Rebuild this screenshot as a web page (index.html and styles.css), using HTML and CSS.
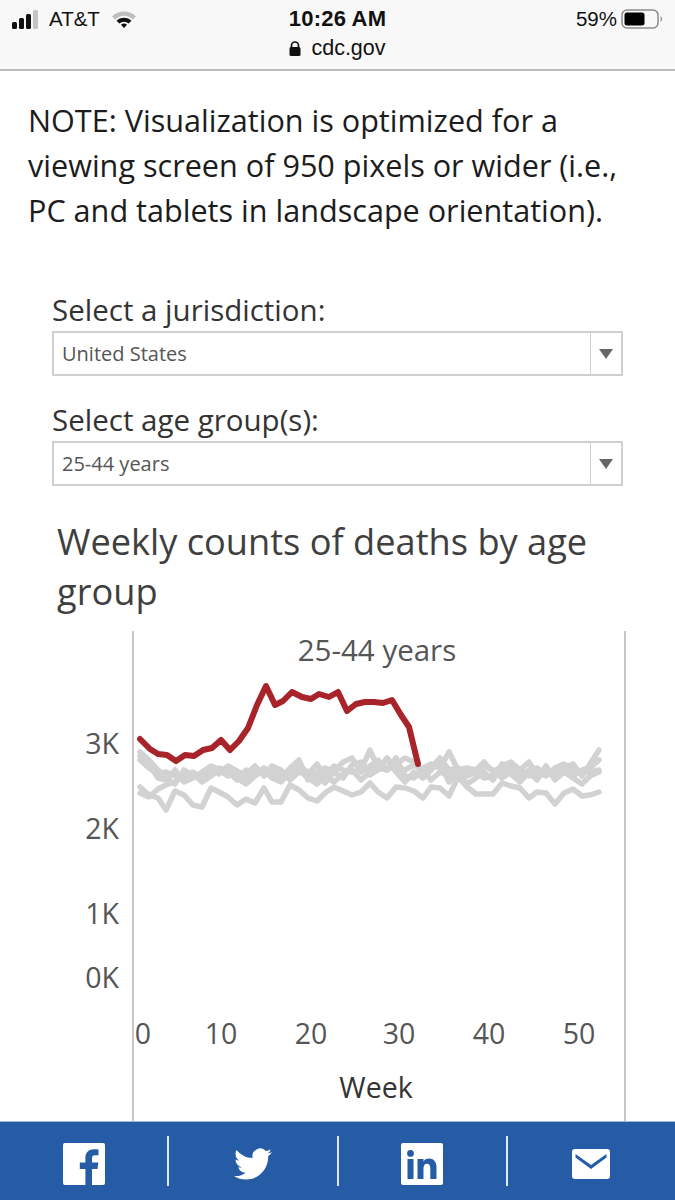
FILE: index.html
```html
<!DOCTYPE html>
<html lang="en">
<head>
<meta charset="utf-8">
<title>Weekly counts of deaths by age group</title>
<link rel="stylesheet" href="styles.css">
</head>
<body>
<div class="page">
  <header class="browser">
    <div class="status">
      <div class="status-left">
        <svg class="signal" viewBox="0 0 28 19"><rect x="0" y="12" width="5" height="7" rx="1.500" fill="#111"/><rect x="7" y="8" width="5" height="11" rx="1.500" fill="#111"/><rect x="14" y="4" width="5" height="15" rx="1.500" fill="#111"/><rect x="21" y="0" width="5" height="19" rx="1.500" fill="#c4c4c4"/></svg>
        <span>AT&amp;T</span>
        <svg class="wifi" viewBox="0 0 24 17"><path d="M0 5.500A17 17 0 0 1 24 5.500L21 8.500A12.800 12.800 0 0 0 3 8.500Z" fill="#bdbdbd"/><path d="M4.500 9.800A10.500 10.500 0 0 1 19.500 9.800L16.600 12.600A6.500 6.500 0 0 0 7.400 12.600Z" fill="#111"/><path d="M9 13.800A4.200 4.200 0 0 1 15 13.800L12 17Z" fill="#111"/></svg>
      </div>
      <div class="clock">10:26 AM</div>
      <div class="status-right">
        <span>59%</span>
        <svg class="battery" viewBox="0 0 42 20"><rect x="1" y="1" width="36" height="18" rx="5" fill="none" stroke="#8a8a8a" stroke-width="1.500"/><rect x="3.500" y="3.500" width="20" height="13" rx="2.500" fill="#000"/><path d="M39.500 7a3.500 3.500 0 0 1 0 6Z" fill="#9a9a9a"/></svg>
      </div>
    </div>
    <div class="address">
      <svg class="lock" viewBox="0 0 12 15"><path d="M2.500 7V4.500a3.500 3.500 0 0 1 7 0V7" fill="none" stroke="#111" stroke-width="1.700"/><rect x="0.500" y="6" width="11" height="9" rx="1.500" fill="#111"/></svg>
      <span>cdc.gov</span>
    </div>
  </header>

  <main class="content">
    <p class="note">NOTE: Visualization is optimized for a viewing screen of 950 pixels or wider (i.e., PC and tablets in landscape orientation).</p>

    <section class="filters">
      <div class="filter">
        <div class="filter-label">Select a jurisdiction:</div>
        <div class="select"><span class="select-value">United States</span><span class="select-btn"><i class="caret"></i></span></div>
      </div>
      <div class="filter">
        <div class="filter-label">Select age group(s):</div>
        <div class="select"><span class="select-value">25-44 years</span><span class="select-btn"><i class="caret"></i></span></div>
      </div>
    </section>

    <h1 class="chart-title">Weekly counts of deaths by age group</h1>

    <svg class="chart" viewBox="0 631 675 490" role="img" aria-label="Weekly deaths line chart">
      <line class="axis" x1="133" y1="631" x2="133" y2="1121"/>
      <line class="axis" x1="625" y1="631" x2="625" y2="1121"/>
      <text class="pane-title" x="377" y="661">25-44 years</text>

      <text class="tick end" x="119" y="754">3K</text>
      <text class="tick end" x="119" y="839">2K</text>
      <text class="tick end" x="119" y="924">1K</text>
      <text class="tick end" x="119" y="988">0K</text>

      <text class="tick mid" x="143" y="1044">0</text>
      <text class="tick mid" x="221" y="1044">10</text>
      <text class="tick mid" x="311" y="1044">20</text>
      <text class="tick mid" x="399" y="1044">30</text>
      <text class="tick mid" x="489" y="1044">40</text>
      <text class="tick mid" x="579" y="1044">50</text>
      <text class="axis-title" x="376" y="1098">Week</text>

      <g class="grey">
        <polyline points="140,787 149,795 158,798 166,810 175,791 184,795 193,805 202,807 211,788 219,792 228,797 237,805 246,799 255,803 264,788 272,802 281,802 290,785 299,790 308,798 317,801 325,793 334,787 343,791 352,795 361,792 370,783 378,792 387,798 396,787 405,788 414,791 423,798 431,787 440,788 449,796 458,777 467,787 476,794 484,794 493,794 502,783 511,786 520,788 529,798 537,792 546,793 555,804 564,793 573,789 582,796 590,795 599,792"/>
        <polyline points="140,793 149,797 158,789 166,785 175,782 184,776 193,774 202,782 211,776 219,770 228,768 237,778 246,784 255,776 264,770 272,778 281,782 290,772 299,770 308,778 317,784 325,776 334,782 343,774 352,770 361,780 370,772 378,766 387,760 396,772 405,782 414,772 423,778 431,770 440,762 449,782 458,772 467,784 476,778 484,772 493,780 502,764 511,774 520,782 529,772 537,780 546,766 555,780 564,772 573,778 582,784 590,776 599,772"/>
        <polyline points="140,752 149,760 158,770 166,778 175,784 184,770 193,776 202,778 211,772 219,768 228,772 237,780 246,770 255,775 264,768 272,772 281,778 290,768 299,760 308,780 317,772 325,783 334,772 343,778 352,765 361,762 370,775 378,770 387,758 396,768 405,770 414,765 423,770 431,780 440,772 449,776 458,768 467,776 476,772 484,766 493,770 502,778 511,772 520,770 529,776 537,772 546,776 555,768 564,764 573,770 582,772 590,772 599,770"/>
        <polyline points="140,760 149,768 158,774 166,772 175,776 184,775 193,772 202,778 211,768 219,774 228,766 237,771 246,780 255,770 264,772 272,770 281,774 290,776 299,766 308,772 317,778 325,768 334,772 343,762 352,758 361,772 370,766 378,760 387,770 396,764 405,758 414,762 423,772 431,768 440,758 449,770 458,768 467,772 476,770 484,778 493,776 502,772 511,766 520,778 529,770 537,768 546,774 555,770 564,766 573,776 582,770 590,768 599,760"/>
        <polyline points="140,756 149,764 158,778 166,780 175,770 184,782 193,778 202,772 211,766 219,770 228,776 237,772 246,774 255,766 264,776 272,766 281,770 290,780 299,772 308,774 317,764 325,776 334,766 343,770 352,772 361,770 370,750 378,768 387,770 396,758 405,776 414,778 423,768 431,764 440,768 449,752 458,770 467,768 476,770 484,762 493,772 502,766 511,762 520,770 529,762 537,776 546,770 555,776 564,768 573,764 582,776 590,764 599,750"/>
      </g>
      <polyline class="red" points="140,739 150,749 158,754 167,755 176,761 185,755 194,756 203,750 212,748 221,740 230,750 239,741 248,728 257,705 266,686 275,705 283,701 292,692 302,697 311,699 319,694 329,697 338,692 347,711 356,704 365,702 374,702 383,703 392,700 401,715 409,727 418,764"/>
    </svg>
  </main>

  <footer class="share">
    <a class="share-item" href="#" aria-label="Facebook">
      <svg class="ic-square" viewBox="0 0 42 42"><path fill-rule="evenodd" fill="#fff" d="M2 0H40a2 2 0 0 1 2 2V40a2 2 0 0 1-2 2H29V26H34.500L35.300 19.500H29V15.500C29 13.500 29.700 12.300 32 12.300H35.500V6.500C34.500 6.400 32.800 6.200 30.800 6.200 26 6.200 22.400 9.200 22.400 14.700V19.500H16.800V26H22.400V42H2a2 2 0 0 1-2-2V2a2 2 0 0 1 2-2Z"/></svg>
    </a>
    <a class="share-item" href="#" aria-label="Twitter">
      <svg class="ic-bird" viewBox="0 0 24 24"><path fill="#fff" d="M23.950 4.570a10 10 0 0 1-2.820.77 4.960 4.960 0 0 0 2.160-2.720c-.95.55-2 .96-3.120 1.180a4.920 4.920 0 0 0-8.380 4.480C7.690 8.100 4.070 6.130 1.640 3.160a4.820 4.820 0 0 0-.67 2.480c0 1.710.87 3.210 2.190 4.100a4.900 4.900 0 0 1-2.230-.62v.06a4.920 4.920 0 0 0 3.950 4.830 5 5 0 0 1-2.210.08 4.940 4.940 0 0 0 4.600 3.420A9.870 9.870 0 0 1 0 19.540a14 14 0 0 0 7.560 2.210c9.050 0 14-7.500 14-13.980 0-.21 0-.42-.02-.63a9.940 9.940 0 0 0 2.460-2.550z"/></svg>
    </a>
    <a class="share-item" href="#" aria-label="LinkedIn">
      <svg class="ic-square" viewBox="0 0 42 42"><path fill-rule="evenodd" fill="#fff" d="M2 0H40a2 2 0 0 1 2 2V40a2 2 0 0 1-2 2H2a2 2 0 0 1-2-2V2a2 2 0 0 1 2-2ZM6.500 16V36H12.500V16ZM9.500 7A3.400 3.400 0 1 0 9.500 13.800 3.400 3.400 0 1 0 9.500 7ZM16.500 16V36H22.500V25.500C22.500 22.500 23.500 20.800 26 20.800 28.300 20.800 29.300 22.500 29.300 25.500V36H35.500V24.500C35.500 18.500 32.500 15.500 28 15.500 25.300 15.500 23.500 16.800 22.500 18.500V16Z"/></svg>
    </a>
    <a class="share-item" href="#" aria-label="Email">
      <svg class="ic-mail" viewBox="0 0 38 30"><path fill-rule="evenodd" fill="#fff" d="M3 0H35a3 3 0 0 1 3 3V27a3 3 0 0 1-3 3H3a3 3 0 0 1-3-3V3a3 3 0 0 1 3-3ZM3.500 8.500 19 20 34.500 8.500V5L19 16 3.500 5Z"/></svg>
    </a>
  </footer>
</div>
</body>
</html>
```

FILE: styles.css
```css
* { box-sizing: border-box; }

html, body {
  margin: 0;
  padding: 0;
  background: #fff;
}

.page {
  width: 675px;
  height: 1200px;
  overflow: hidden;
  display: flex;
  flex-direction: column;
  font-family: "Open Sans", "Noto Sans", sans-serif;
}

/* Browser chrome */
.browser {
  flex: none;
  height: 71px;
  padding-top: 6px;
  background: #f8f8f8;
  border-bottom: 2px solid #bdbdbd;
  font-family: "Liberation Sans", Arial, sans-serif;
  color: #111;
}

.status {
  display: grid;
  grid-template-columns: 1fr auto 1fr;
  align-items: center;
  height: 25px;
  padding: 0 12px;
  font-size: 20.500px;
}

.status-left,
.status-right {
  display: flex;
  align-items: center;
}

.status-right { justify-content: flex-end; }

.signal { width: 28px; height: 19px; margin-right: 9px; }
.wifi { width: 24px; height: 17px; margin-left: 12px; }
.battery { width: 42px; height: 20px; margin-left: 4px; }

.clock {
  font-size: 22px;
  font-weight: 700;
  letter-spacing: 0.2px;
}

.address {
  display: flex;
  justify-content: center;
  align-items: center;
  height: 28px;
  margin-top: 3px;
  font-size: 21.500px;
}

.lock { width: 12px; height: 15px; margin-right: 10px; }

/* Content */
.content {
  flex: 1;
  min-height: 0;
}

.note {
  margin: 0;
  padding: 27px 30px 0 28px;
  font-size: 30.600px;
  line-height: 45px;
  color: #1c1c1c;
}

.filters {
  margin-top: 57px;
  padding: 0 52px;
}

.filter + .filter { margin-top: 24px; }

.filter-label {
  height: 40px;
  font-size: 29.500px;
  line-height: 40px;
  color: #333;
}

.select {
  display: flex;
  height: 45px;
  margin-top: 1px;
  border: 2px solid #cfcfcf;
}

.select-value {
  flex: 1;
  padding-left: 8px;
  font-size: 20px;
  line-height: 41px;
  color: #555;
}

.select-btn {
  width: 31px;
  border-left: 1px solid #cfcfcf;
  display: flex;
  align-items: center;
  justify-content: center;
}

.caret {
  width: 0;
  height: 0;
  border-left: 7px solid transparent;
  border-right: 7px solid transparent;
  border-top: 10px solid #666;
}

.chart-title {
  margin: 30px 0 0;
  padding: 0 57px;
  font-size: 36.200px;
  font-weight: 400;
  line-height: 50px;
  color: #3f3f3f;
}

.chart {
  display: block;
  width: 675px;
  height: 490px;
  margin-top: 15px;
  overflow: visible;
}

.axis { stroke: #c8c8c8; stroke-width: 2; }

.pane-title,
.tick,
.axis-title {
  font-family: "Open Sans", "Noto Sans", sans-serif;
  fill: #555;
}

.pane-title {
  font-size: 29.500px;
  text-anchor: middle;
}

.tick { font-size: 28.500px; }
.tick.end { text-anchor: end; }
.tick.mid { text-anchor: middle; }

.axis-title {
  font-size: 28.500px;
  text-anchor: middle;
  fill: #333;
}

.grey polyline,
.red {
  fill: none;
  stroke-linejoin: round;
  stroke-linecap: round;
}

.grey polyline { stroke: #d2d2d2; stroke-width: 5.500; }
.red { stroke: #a8232a; stroke-width: 6; }

/* Share bar */
.share {
  flex: none;
  height: 79px;
  display: flex;
  background: #265ca6;
  border-top: 1px solid #9db8d8;
  padding-top: 14px;
}

.share-item {
  flex: 1;
  height: 50px;
  display: flex;
  align-items: center;
  justify-content: center;
  border-right: 2px solid #dfe8f3;
}

.share-item:last-child { border-right: 0; }

.ic-square { width: 42px; height: 42px; margin-top: 6px; }
.ic-bird { width: 38px; height: 38px; margin-top: 6px; }
.ic-mail { width: 38px; height: 30px; margin-top: 6px; }
```
